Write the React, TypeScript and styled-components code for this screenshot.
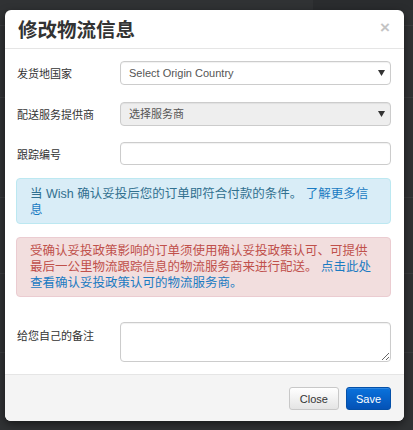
import styled, { createGlobalStyle } from 'styled-components';

const GlobalStyle = createGlobalStyle`
  html, body {
    margin: 0;
    padding: 0;
  }
  body {
    width: 413px;
    height: 430px;
    overflow: hidden;
    background-color: #303234;
    background-image:
      linear-gradient(#3a3c3e, #3a3c3e),
      linear-gradient(#3a3c3e, #3a3c3e),
      linear-gradient(#3a3c3e, #3a3c3e),
      linear-gradient(#3a3c3e, #3a3c3e),
      linear-gradient(#3a3c3e, #3a3c3e),
      linear-gradient(#2a2c2e, #2a2c2e);
    background-size: 100% 1px, 100% 1px, 100% 1px, 100% 1px, 100% 1px, 100px 10px;
    background-position: 0 25px, 0 97px, 0 197px, 0 273px, 0 352px, 313px 0;
    background-repeat: no-repeat;
    font-family: "Liberation Sans", "Noto Sans CJK SC", sans-serif;
    color: #333;
  }
`;

const Modal = styled.div`
  margin: 10px 0 0 5px;
  width: 399px;
  background: #fff;
  border-radius: 6px;
  box-shadow: 0 3px 9px rgba(0, 0, 0, 0.5);
  display: flex;
  flex-direction: column;
`;

const Header = styled.div`
  height: 38px;
  padding: 0 13px 0 13px;
  border-bottom: 1px solid #e5e5e5;
  display: flex;
  align-items: center;
  justify-content: space-between;
`;

const Title = styled.h3`
  margin: 0;
  font-family: "Noto Sans CJK SC", sans-serif;
  font-size: 19.5px;
  font-weight: 700;
  color: #333;
  line-height: 1;
`;

const CloseX = styled.span`
  font-family: "Liberation Sans", sans-serif;
  font-size: 17px;
  font-weight: 700;
  color: #c4c4c4;
  margin-right: 1px;
  margin-top: -2px;
`;

const Body = styled.div`
  padding: 12px 13px 12px 11px;
  display: flex;
  flex-direction: column;
`;

const Row = styled.div<{ $top?: boolean; $gap?: number }>`
  display: grid;
  grid-template-columns: 104px 1fr;
  align-items: ${({ $top }) => ($top ? 'start' : 'center')};
  margin-top: ${({ $gap }) => $gap ?? 0}px;
`;

const Label = styled.label<{ $top?: boolean }>`
  padding-left: 1px;
  padding-top: ${({ $top }) => ($top ? '5px' : '0')};
  font-family: "Noto Sans CJK SC", sans-serif;
  font-size: 11px;
  color: #333;
`;

const SelectWrap = styled.div`
  position: relative;
`;

const Select = styled.select<{ $disabled?: boolean }>`
  appearance: none;
  width: 100%;
  height: 24px;
  box-sizing: border-box;
  padding: 0 8px;
  border: 1px solid #ccc;
  border-radius: 4px;
  background: ${({ $disabled }) => ($disabled ? '#eee' : '#fff')};
  font-family: "Liberation Sans", "Noto Sans CJK SC", sans-serif;
  font-size: 11px;
  color: #555;
  box-shadow: inset 0 1px 1px rgba(0, 0, 0, 0.06);
`;

const Arrow = styled.svg`
  position: absolute;
  right: 6px;
  top: 9px;
  pointer-events: none;
`;

const TextInput = styled.input`
  width: 100%;
  height: 23px;
  box-sizing: border-box;
  border: 1px solid #ccc;
  border-radius: 4px;
  background: #fff;
  box-shadow: inset 0 1px 1px rgba(0, 0, 0, 0.06);
`;

const TextArea = styled.textarea`
  width: 100%;
  height: 40px;
  box-sizing: border-box;
  display: block;
  border: 1px solid #ccc;
  border-radius: 4px;
  background: #fff;
  box-shadow: inset 0 1px 1px rgba(0, 0, 0, 0.06);
`;

const Alert = styled.div<{ $kind: 'info' | 'danger'; $gap: number }>`
  margin-top: ${({ $gap }) => $gap}px;
  border: 1px solid ${({ $kind }) => ($kind === 'info' ? '#bce8f1' : '#ebccd1')};
  background: ${({ $kind }) => ($kind === 'info' ? '#d9edf7' : '#f2dede')};
  color: ${({ $kind }) => ($kind === 'info' ? '#31708f' : '#c0504b')};
  border-radius: 4px;
  padding: ${({ $kind }) => ($kind === 'info' ? '7px 10px 4px 13px' : '5px 10px 5px 13px')};
  font-family: "Liberation Sans", "Noto Sans CJK SC", sans-serif;
  font-size: 12.5px;
  line-height: 16.25px;
  white-space: nowrap;
`;

const AlertLink = styled.a`
  color: #1a7bc2;
  text-decoration: none;
`;

const Footer = styled.div`
  border-top: 1px solid #e5e5e5;
  background: #f4f4f4;
  border-radius: 0 0 6px 6px;
  height: 47px;
  box-sizing: border-box;
  padding: 12px 13px 0;
  display: flex;
  justify-content: flex-end;
  align-items: flex-start;
  gap: 7px;
`;

const Button = styled.button<{ $primary?: boolean }>`
  height: 23px;
  padding: 0 ${({ $primary }) => ($primary ? '9px' : '10px')};
  border-radius: 3px;
  font-family: "Liberation Sans", sans-serif;
  font-size: 11px;
  border: 1px solid ${({ $primary }) => ($primary ? '#0450a8' : '#c8c8c8')};
  color: ${({ $primary }) => ($primary ? '#fff' : '#333')};
  background: ${({ $primary }) =>
    $primary
      ? 'linear-gradient(#0a72dc, #0452b6)'
      : 'linear-gradient(#ffffff, #e4e4e4)'};
  box-shadow: inset 0 1px 0 rgba(255, 255, 255, 0.15);
`;

function DownArrow() {
  return (
    <Arrow width="7" height="6" viewBox="0 0 7 6">
      <path d="M0 0 H7 L3.5 6 Z" fill="#333" />
    </Arrow>
  );
}

export default function App() {
  return (
    <>
      <GlobalStyle />
      <Modal>
        <Header>
          <Title>修改物流信息</Title>
          <CloseX>×</CloseX>
        </Header>
        <Body>
          <Row>
            <Label>发货地国家</Label>
            <SelectWrap>
              <Select defaultValue="">
                <option value="">Select Origin Country</option>
              </Select>
              <DownArrow />
            </SelectWrap>
          </Row>
          <Row $gap={17}>
            <Label>配送服务提供商</Label>
            <SelectWrap>
              <Select $disabled defaultValue="">
                <option value="">选择服务商</option>
              </Select>
              <DownArrow />
            </SelectWrap>
          </Row>
          <Row $gap={16}>
            <Label>跟踪编号</Label>
            <TextInput type="text" />
          </Row>
          <Alert $kind="info" $gap={13}>
            当 Wish 确认妥投后您的订单即符合付款的条件。 <AlertLink>了解更多信</AlertLink>
            <br />
            <AlertLink>息</AlertLink>
          </Alert>
          <Alert $kind="danger" $gap={13}>
            受确认妥投政策影响的订单须使用确认妥投政策认可、可提供
            <br />
            最后一公里物流跟踪信息的物流服务商来进行配送。 <AlertLink>点击此处</AlertLink>
            <br />
            <AlertLink>查看确认妥投政策认可的物流服务商。</AlertLink>
          </Alert>
          <Row $top $gap={25}>
            <Label $top>给您自己的备注</Label>
            <TextArea />
          </Row>
        </Body>
        <Footer>
          <Button>Close</Button>
          <Button $primary>Save</Button>
        </Footer>
      </Modal>
    </>
  );
}
